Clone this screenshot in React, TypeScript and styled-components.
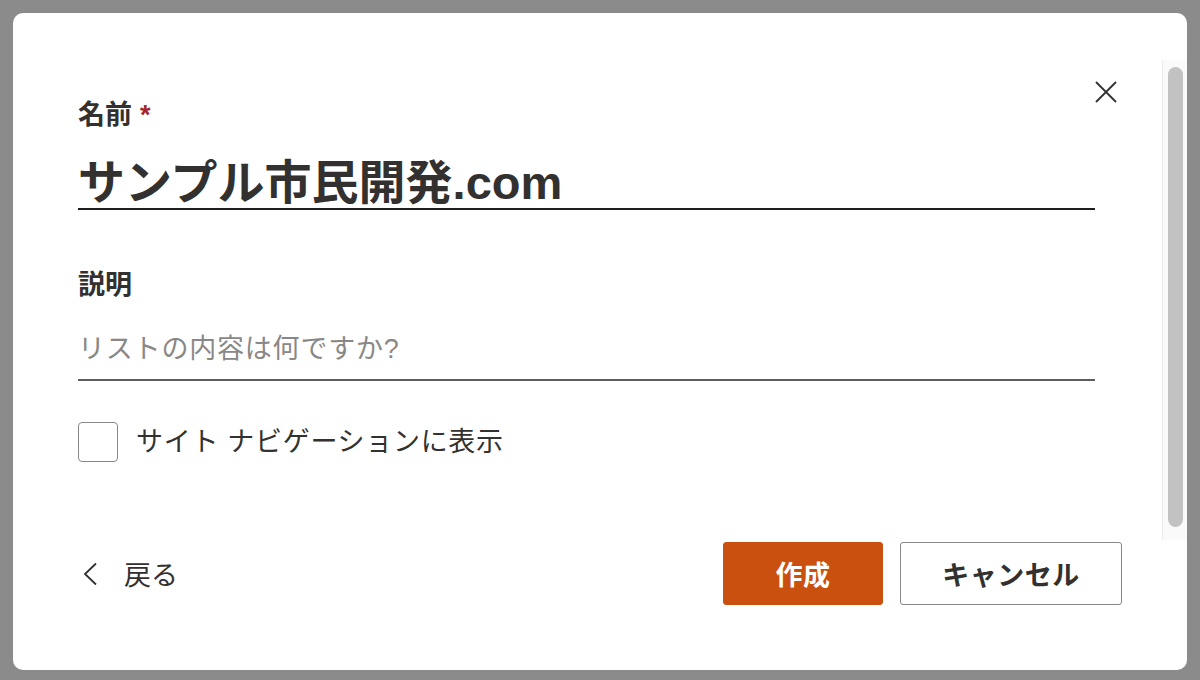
import React from 'react';
import styled, { createGlobalStyle } from 'styled-components';

const GlobalStyle = createGlobalStyle`
  html, body {
    margin: 0;
    padding: 0;
    background: #8b8b8b;
  }
  body {
    font-family: "Liberation Sans", "Noto Sans CJK JP", sans-serif;
    color: #323130;
  }
  * { box-sizing: border-box; }
`;

const Backdrop = styled.div`
  height: 680px;
  padding: 13px;
  background: #8b8b8b;
`;

const Dialog = styled.div`
  position: relative;
  height: 657px;
  background: #ffffff;
  border-radius: 10px;
  display: flex;
  flex-direction: column;
  overflow: hidden;
`;

const CloseButton = styled.button`
  position: absolute;
  top: 68px;
  right: 70px;
  width: 22px;
  height: 22px;
  padding: 0;
  border: none;
  background: transparent;
  display: flex;
  cursor: pointer;
`;

const Body = styled.div`
  display: flex;
  padding-top: 47px;
  height: 527px;
`;

const Form = styled.div`
  flex: 1;
  padding: 37px 67px 0 65px;
  display: flex;
  flex-direction: column;
`;

const Label = styled.label<{ $gap?: number }>`
  display: block;
  margin-top: ${p => p.$gap ?? 0}px;
  font-size: 27px;
  line-height: 36px;
  font-weight: 700;
  color: #323130;
`;

const Required = styled.span`
  color: #a4262c;
  margin-left: 8px;
  font-weight: 700;
`;

const TitleInput = styled.input`
  margin-top: 15px;
  width: 100%;
  padding: 0;
  border: none;
  border-bottom: 2px solid #201f1e;
  outline: none;
  background: transparent;
  font-family: inherit;
  font-size: 47px;
  line-height: 60px;
  height: 62px;
  font-weight: 600;
  color: #323130;
`;

const TextInput = styled.input`
  margin-top: 24px;
  width: 100%;
  padding: 0 0 8px 0;
  border: none;
  border-bottom: 2px solid #605e5c;
  outline: none;
  background: transparent;
  font-family: inherit;
  font-size: 27px;
  letter-spacing: 0.8px;
  line-height: 44px;
  height: 54px;
  color: #323130;
  &::placeholder {
    color: #8a8886;
  }
`;

const CheckRow = styled.label`
  margin-top: 41px;
  display: flex;
  align-items: center;
  gap: 18px;
  cursor: pointer;
`;

const CheckBox = styled.input`
  appearance: none;
  margin: 0;
  width: 40px;
  height: 40px;
  border: 1.5px solid #8a8886;
  border-radius: 4px;
  background: #fff;
`;

const CheckText = styled.span`
  font-size: 27px;
  letter-spacing: 0.7px;
  line-height: 40px;
  color: #323130;
`;

const ScrollTrack = styled.div`
  width: 25px;
  height: 480px;
  border-left: 1px solid #ececec;
  background: #fafafa;
  padding: 7px 4px 13px 5px;
  display: flex;
`;

const ScrollThumb = styled.div`
  flex: 1;
  background: #c2c2c2;
  border-radius: 8px;
`;

const Footer = styled.div`
  display: flex;
  align-items: center;
  justify-content: space-between;
  padding: 2px 65px 0 65px;
`;

const BackLink = styled.button`
  display: flex;
  align-items: center;
  gap: 26px;
  padding: 0 0 0 5px;
  border: none;
  background: transparent;
  font-family: inherit;
  font-size: 27px;
  color: #323130;
  cursor: pointer;
`;

const Actions = styled.div`
  display: flex;
  gap: 17px;
`;

const Button = styled.button<{ $primary?: boolean; $width: number }>`
  width: ${p => p.$width}px;
  height: 63px;
  border-radius: 3px;
  font-family: inherit;
  font-size: 27px;
  font-weight: 700;
  letter-spacing: 0.5px;
  cursor: pointer;
  border: ${p => (p.$primary ? '1px solid #ca5010' : '1.5px solid #8a8886')};
  background: ${p => (p.$primary ? '#ca5010' : '#ffffff')};
  color: ${p => (p.$primary ? '#ffffff' : '#323130')};
`;

function CloseIcon() {
  return (
    <svg width="22" height="22" viewBox="0 0 22 22">
      <path d="M1 1L21 21M21 1L1 21" stroke="#323130" strokeWidth="1.8" fill="none" />
    </svg>
  );
}

function ChevronLeft() {
  return (
    <svg width="15" height="24" viewBox="0 0 15 24">
      <path d="M13 1.5L2 12L13 22.5" stroke="#323130" strokeWidth="1.8" fill="none" />
    </svg>
  );
}

export default function App() {
  return (
    <>
      <GlobalStyle />
      <Backdrop>
        <Dialog>
          <CloseButton aria-label="閉じる">
            <CloseIcon />
          </CloseButton>
          <Body>
            <Form>
              <Label>
                名前<Required>*</Required>
              </Label>
              <TitleInput defaultValue="サンプル市民開発.com" />
              <Label $gap={57}>説明</Label>
              <TextInput placeholder="リストの内容は何ですか?" />
              <CheckRow>
                <CheckBox type="checkbox" />
                <CheckText>サイト ナビゲーションに表示</CheckText>
              </CheckRow>
            </Form>
            <ScrollTrack>
              <ScrollThumb />
            </ScrollTrack>
          </Body>
          <Footer>
            <BackLink>
              <ChevronLeft />
              戻る
            </BackLink>
            <Actions>
              <Button $primary $width={160}>作成</Button>
              <Button $width={222}>キャンセル</Button>
            </Actions>
          </Footer>
        </Dialog>
      </Backdrop>
    </>
  );
}
